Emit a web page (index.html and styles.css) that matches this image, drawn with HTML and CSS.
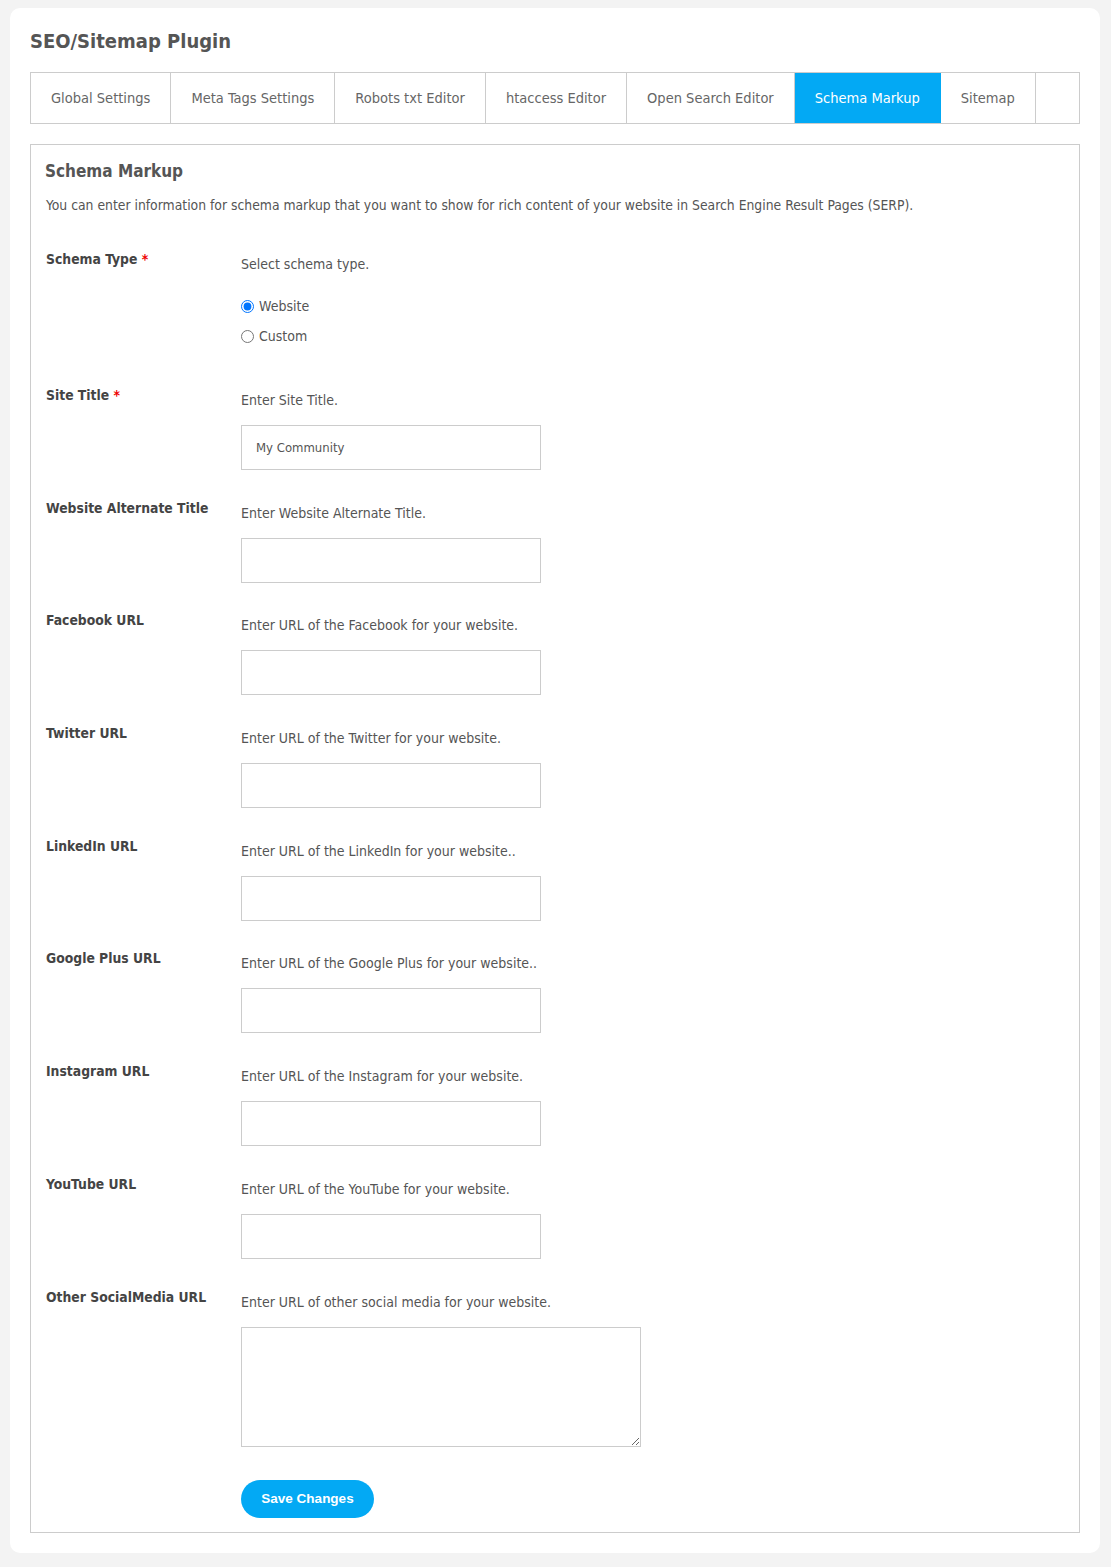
FILE: index.html
```html
<!DOCTYPE html>
<html lang="en">
<head>
<meta charset="utf-8">
<title>SEO/Sitemap Plugin</title>
<link rel="stylesheet" href="styles.css">
</head>
<body>
<div class="card">
  <h1 class="page-title">SEO/Sitemap Plugin</h1>
  <ul class="tabs">
    <li class="tab">Global Settings</li>
    <li class="tab">Meta Tags Settings</li>
    <li class="tab">Robots txt Editor</li>
    <li class="tab">htaccess Editor</li>
    <li class="tab">Open Search Editor</li>
    <li class="tab active">Schema Markup</li>
    <li class="tab">Sitemap</li>
  </ul>
  <div class="panel">
    <h2 class="panel-title">Schema Markup</h2>
    <p class="panel-desc">You can enter information for schema markup that you want to show for rich content of your website in Search Engine Result Pages (SERP).</p>

    <div class="row row-radio">
      <div class="label">Schema Type <span class="req">*</span></div>
      <div class="field">
        <div class="hint">Select schema type.</div>
        <div class="radios">
          <label class="radio"><input type="radio" name="stype" checked> Website</label>
          <label class="radio"><input type="radio" name="stype"> Custom</label>
        </div>
      </div>
    </div>

    <div class="row">
      <div class="label">Site Title <span class="req">*</span></div>
      <div class="field">
        <div class="hint">Enter Site Title.</div>
        <input class="text" type="text" value="My Community">
      </div>
    </div>

    <div class="row">
      <div class="label">Website Alternate Title</div>
      <div class="field">
        <div class="hint">Enter Website Alternate Title.</div>
        <input class="text" type="text">
      </div>
    </div>

    <div class="row">
      <div class="label">Facebook URL</div>
      <div class="field">
        <div class="hint">Enter URL of the Facebook for your website.</div>
        <input class="text" type="text">
      </div>
    </div>

    <div class="row">
      <div class="label">Twitter URL</div>
      <div class="field">
        <div class="hint">Enter URL of the Twitter for your website.</div>
        <input class="text" type="text">
      </div>
    </div>

    <div class="row">
      <div class="label">LinkedIn URL</div>
      <div class="field">
        <div class="hint">Enter URL of the LinkedIn for your website..</div>
        <input class="text" type="text">
      </div>
    </div>

    <div class="row">
      <div class="label">Google Plus URL</div>
      <div class="field">
        <div class="hint">Enter URL of the Google Plus for your website..</div>
        <input class="text" type="text">
      </div>
    </div>

    <div class="row">
      <div class="label">Instagram URL</div>
      <div class="field">
        <div class="hint">Enter URL of the Instagram for your website.</div>
        <input class="text" type="text">
      </div>
    </div>

    <div class="row">
      <div class="label">YouTube URL</div>
      <div class="field">
        <div class="hint">Enter URL of the YouTube for your website.</div>
        <input class="text" type="text">
      </div>
    </div>

    <div class="row">
      <div class="label">Other SocialMedia URL</div>
      <div class="field">
        <div class="hint">Enter URL of other social media for your website.</div>
        <textarea class="area"></textarea>
      </div>
    </div>

    <div class="row row-actions">
      <div class="label"></div>
      <div class="field">
        <button class="btn" type="button">Save Changes</button>
      </div>
    </div>
  </div>
</div>
</body>
</html>
```

FILE: styles.css
```css
html, body {
  margin: 0;
  padding: 0;
}
body {
  background: #f3f3f3;
  padding: 8px 11px 14px 10px;
  font-family: "DejaVu Sans Condensed", "DejaVu Sans", Verdana, sans-serif;
  font-size: 14px;
  color: #555;
}
.card {
  background: #fff;
  border-radius: 10px;
  padding: 20px 20px 20px 20px;
}
.page-title {
  margin: 0 0 18px 0;
  font-size: 20px;
  line-height: 26px;
  font-weight: bold;
  color: #555;
}
.tabs {
  list-style: none;
  margin: 0;
  padding: 0;
  display: flex;
  border: 1px solid #ccc;
  height: 50px;
}
.tab {
  padding: 0 20px;
  line-height: 50px;
  border-right: 1px solid #ccc;
  color: #666;
  font-size: 14.52px;
  white-space: nowrap;
}
.tab.active {
  background: #03a9f4;
  color: #fff;
  border-right-color: #03a9f4;
}
.panel {
  margin-top: 20px;
  border: 1px solid #ccc;
  padding: 14px 15px 14px 15px;
}
.panel-title {
  margin: 0 0 0 -1px;
  font-size: 17px;
  line-height: 24px;
  font-weight: bold;
  color: #555;
}
.panel-desc {
  margin: 12px 0 0 0;
  line-height: 20px;
  font-size: 13.8px;
  color: #555;
}
.row {
  display: flex;
  margin-top: 27.7px;
}
.row-radio {
  margin-top: 34px;
}
.row-radio + .row {
  margin-top: 39px;
}
.label {
  width: 195px;
  flex: none;
  line-height: 20px;
  font-weight: bold;
  font-size: 13.8px;
  color: #444;
}
.req {
  color: #e00;
}
.field {
  padding-top: 5px;
  line-height: 20px;
}
.hint {
  line-height: 20px;
}
.radios {
  margin-top: 22px;
  display: flex;
  flex-direction: column;
  gap: 10px;
}
.radio {
  display: flex;
  align-items: center;
  line-height: 20px;
}
.radio input {
  margin: 0 5px 0 0;
  width: 13px;
  height: 13px;
}
.text {
  display: block;
  margin-top: 15px;
  box-sizing: border-box;
  width: 300px;
  height: 45px;
  border: 1px solid #ccc;
  padding: 0 14px;
  font-family: inherit;
  font-size: 13px;
  color: #555;
  outline: none;
}
.area {
  display: block;
  margin-top: 15px;
  box-sizing: border-box;
  width: 400px;
  height: 120px;
  border: 1px solid #ccc;
  font-family: inherit;
  font-size: 13px;
}
.row.row-actions {
  margin-top: 33px;
}
.row-actions .field {
  padding-top: 0;
}
.btn {
  display: block;
  background: #03a9f4;
  color: #fff;
  border: none;
  border-radius: 19px;
  width: 133px;
  height: 38px;
  padding: 0;
  font-family: "Liberation Sans", Arial, sans-serif;
  font-weight: bold;
  font-size: 13.5px;
  cursor: pointer;
}
```
